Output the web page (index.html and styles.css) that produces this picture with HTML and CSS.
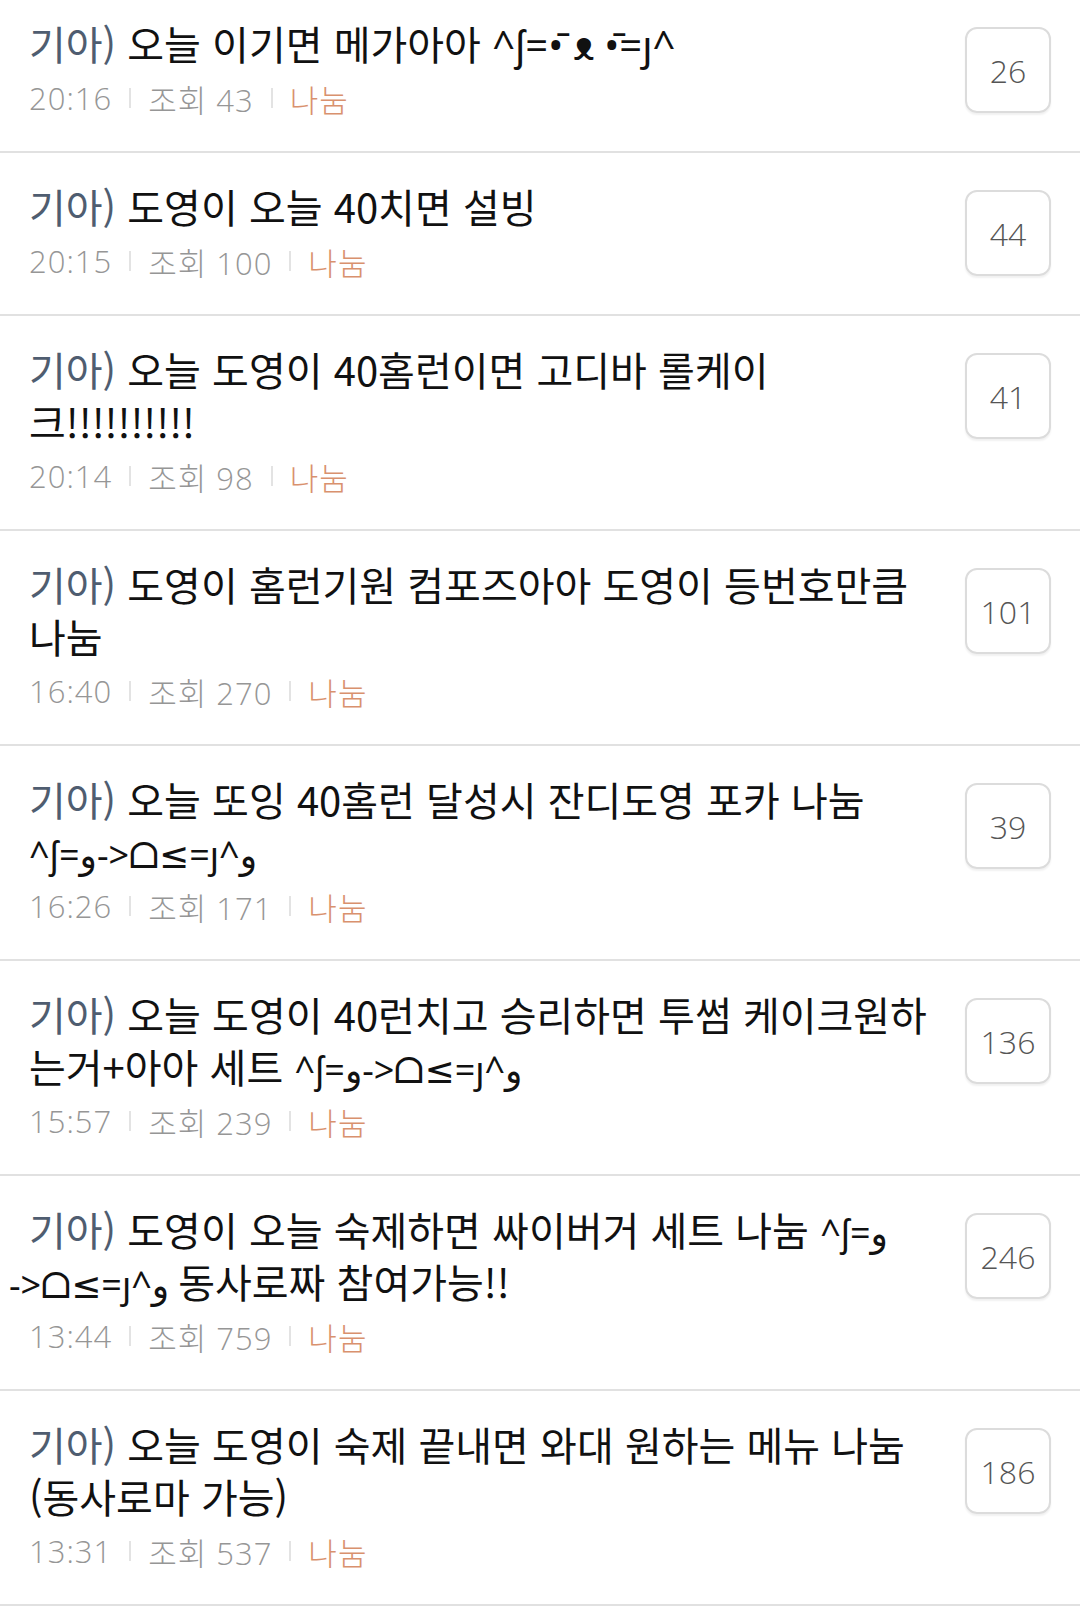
FILE: index.html
```html
<!DOCTYPE html>
<html lang="ko">
<head>
    <meta charset="UTF-8">
    <meta name="viewport" content="width=device-width, initial-scale=1.0">
    <title>나눔 게시판</title>
    <link rel="stylesheet" href="styles.css">
</head>
<body>

    <div class="list">
        <div class="post">
            <div class="post-body">
                <p class="title"><span class="tag">기아)</span> 오늘 이기면 메가아아 <span class="emo">^ʃ=•̄ ᴥ •̄=ȷ^</span></p>
                <div class="meta"><span>20:16</span><span class="bar"></span><span>조회 43</span><span class="bar"></span><span class="share">나눔</span></div>
            </div>
            <div class="count">26</div>
        </div>

        <div class="post">
            <div class="post-body">
                <p class="title"><span class="tag">기아)</span> 도영이 오늘 40치면 설빙</p>
                <div class="meta"><span>20:15</span><span class="bar"></span><span>조회 100</span><span class="bar"></span><span class="share">나눔</span></div>
            </div>
            <div class="count">44</div>
        </div>

        <div class="post">
            <div class="post-body">
                <p class="title"><span class="tag">기아)</span> 오늘 도영이 40홈런이면 고디바 롤케이크!!!!!!!!!!</p>
                <div class="meta"><span>20:14</span><span class="bar"></span><span>조회 98</span><span class="bar"></span><span class="share">나눔</span></div>
            </div>
            <div class="count">41</div>
        </div>

        <div class="post">
            <div class="post-body">
                <p class="title"><span class="tag">기아)</span> 도영이 홈런기원 컴포즈아아 도영이 등번호만큼 나눔</p>
                <div class="meta"><span>16:40</span><span class="bar"></span><span>조회 270</span><span class="bar"></span><span class="share">나눔</span></div>
            </div>
            <div class="count">101</div>
        </div>

        <div class="post">
            <div class="post-body">
                <p class="title"><span class="tag">기아)</span> 오늘 또잉 40홈런 달성시 잔디도영 포카 나눔 <span class="emo small">^ʃ=ﻭ->ᗝ≤=ȷ^ﻭ</span></p>
                <div class="meta"><span>16:26</span><span class="bar"></span><span>조회 171</span><span class="bar"></span><span class="share">나눔</span></div>
            </div>
            <div class="count">39</div>
        </div>

        <div class="post">
            <div class="post-body">
                <p class="title"><span class="tag">기아)</span> 오늘 도영이 40런치고 승리하면 투썸 케이크원하는거+아아 세트 <span class="emo small">^ʃ=ﻭ->ᗝ≤=ȷ^ﻭ</span></p>
                <div class="meta"><span>15:57</span><span class="bar"></span><span>조회 239</span><span class="bar"></span><span class="share">나눔</span></div>
            </div>
            <div class="count">136</div>
        </div>

        <div class="post">
            <div class="post-body">
                <p class="title"><span class="tag">기아)</span> 도영이 오늘 숙제하면 싸이버거 세트 나눔 <span class="emo small">^ʃ=ﻭ</span><br><span class="emo small outdent">->ᗝ≤=ȷ^ﻭ</span> 동사로짜 참여가능!!</p>
                <div class="meta"><span>13:44</span><span class="bar"></span><span>조회 759</span><span class="bar"></span><span class="share">나눔</span></div>
            </div>
            <div class="count">246</div>
        </div>

        <div class="post">
            <div class="post-body">
                <p class="title"><span class="tag">기아)</span> 오늘 도영이 숙제 끝내면 와대 원하는 메뉴 나눔 (동사로마 가능)</p>
                <div class="meta"><span>13:31</span><span class="bar"></span><span>조회 537</span><span class="bar"></span><span class="share">나눔</span></div>
            </div>
            <div class="count">186</div>
        </div>
    </div>

</body>
</html>
```

FILE: styles.css
```css
body {
    margin: 0;
    background: #ffffff;
    font-family: "Noto Sans CJK KR", "Noto Sans", "DejaVu Sans", sans-serif;
}

.list {
    margin-top: -10px;
}

.post {
    display: flex;
    align-items: flex-start;
    gap: 37px;
    padding: 27px 29px 33px;
    border-bottom: 2px solid #e1e1e1;
}

.post-body {
    flex: 1;
    min-width: 0;
}

.title {
    margin: 0;
    font-size: 40px;
    line-height: 52px;
    color: #111;
}

.tag {
    color: #4f5d70;
}

.emo {
    font-family: "Noto Sans", "DejaVu Sans", sans-serif;
    line-height: 1;
}

.emo.small {
    font-size: 36px;
}

.outdent {
    margin-left: -20px;
}

.meta {
    display: flex;
    align-items: center;
    margin-top: 9px;
    height: 40px;
    font-family: "Open Sans", "Noto Sans CJK KR", sans-serif;
    font-size: 31px;
    font-weight: 300;
    letter-spacing: 1px;
    color: #969696;
}

.bar {
    width: 2px;
    height: 20px;
    background: #e3e3e3;
    margin: 0 17px;
}

.share {
    color: #d9916e;
}

.count {
    flex: none;
    box-sizing: border-box;
    width: 86px;
    height: 86px;
    margin-top: 10px;
    display: flex;
    align-items: center;
    justify-content: center;
    border: 2px solid #dcdcdc;
    border-radius: 12px;
    box-shadow: 0 2px 2px rgba(0, 0, 0, 0.06);
    font-family: "Open Sans", "Noto Sans CJK KR", sans-serif;
    font-size: 32px;
    font-weight: 300;
    color: #555;
}
```
